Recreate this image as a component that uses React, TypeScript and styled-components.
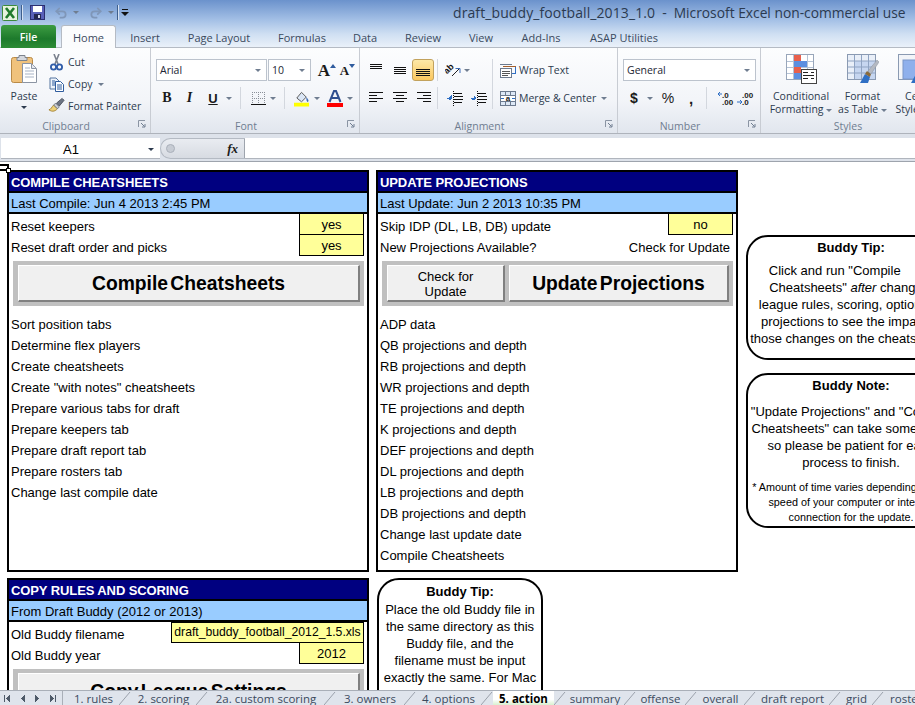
import React from "react";
import styled, { createGlobalStyle } from "styled-components";
import { Undo2, Redo2 } from "lucide-react";

const UI = `"Open Sans", "Noto Sans", sans-serif`;
const CELL = `"Liberation Sans", Arial, sans-serif`;

const Global = createGlobalStyle`
  html, body { margin: 0; padding: 0; background: #fff; overflow: hidden; }
  #root { width: 915px; height: 705px; }
`;

const Window = styled.div`
  width: 915px;
  height: 705px;
  display: flex;
  flex-direction: column;
  overflow: hidden;
  font-family: ${UI};
`;

const Chrome = styled.div`
  height: 48px;
  flex: none;
  background: linear-gradient(#6b92cc 0, #a4c0e6 20px, #cfdff2 34px, #ecf2fa 48px);
  box-shadow: inset 0 -1px 0 #b5bbc4;
`;

const TitleBar = styled.div`
  height: 25px;
  display: flex;
  align-items: center;
  padding-left: 2px;
  white-space: nowrap;
`;

const QuickSep = styled.span<{ $r?: number }>`
  width: 1px;
  height: 15px;
  background: #3f5f8c;
  box-shadow: 1px 0 0 #d6e2f2;
  margin: 0 ${(p) => p.$r ?? 7}px 0 3px;
`;

const Title = styled.div`
  margin-left: auto;
  width: 462px;
  flex: none;
  display: flex;
  align-items: baseline;
  color: #2b3a50;
  font-size: 14px;
`;

const FileName = styled.span`
  letter-spacing: 0.1px;
  margin-right: 7px;
`;

const TitleDash = styled.span`
  margin-right: 7px;
`;

const AppName = styled.span`
  font-size: 13.8px;
`;

const TabRow = styled.div`
  height: 23px;
  display: flex;
  align-items: flex-end;
  font-size: 11px;
`;

const FileTab = styled.div`
  width: 55px;
  height: 23px;
  margin: 0 5px 0 1px;
  border-radius: 3px 3px 0 0;
  background: linear-gradient(#3d9c42, #1d7a2c 60%, #2c8c35);
  color: #fff;
  font-weight: 600;
  font-size: 10.5px;
  display: flex;
  align-items: center;
  justify-content: center;
`;

const RibbonTab = styled.div<{ $active?: boolean; $w: number }>`
  width: ${(p) => p.$w}px;
  height: ${(p) => (p.$active ? 24 : 23)}px;
  text-align: center;
  line-height: 25px;
  color: #3b4a5e;
  box-sizing: border-box;
  ${(p) =>
    p.$active &&
    `background: #fbfcfd;
     border: 1px solid #b5bbc4;
     border-bottom: none;
     border-radius: 3px 3px 0 0;
     margin-bottom: -1px;
     line-height: 24px;`}
`;

const Ribbon = styled.div`
  height: 86px;
  flex: none;
  display: flex;
  font-size: 10.5px;
  color: #2c3a4e;
  background: linear-gradient(#fcfdfe, #f3f5f9 60%, #e1e6ee);
  border-bottom: 1px solid #aeb3bb;
  box-sizing: border-box;
  overflow: hidden;
`;

const Group = styled.div<{ $w: number }>`
  width: ${(p) => p.$w}px;
  flex: none;
  display: flex;
  flex-direction: column;
  box-sizing: border-box;
  border-right: 1px solid #c8ccd3;
`;

const GroupBody = styled.div`
  flex: 1;
  display: flex;
  min-height: 0;
`;

const GroupLabel = styled.div<{ $plain?: boolean }>`
  height: 17px;
  flex: none;
  display: flex;
  align-items: center;
  justify-content: center;
  padding: 2px ${(p) => (p.$plain ? 0 : 18)}px 0 0;
  box-sizing: border-box;
  color: #6f7d90;
  position: relative;
`;

const LauncherBox = styled.svg`
  position: absolute;
  right: 4px;
  top: 4px;
`;

function Launcher() {
  return (
    <LauncherBox width="8" height="8" viewBox="0 0 8 8">
      <path d="M.5 7V.5H7" fill="none" stroke="#8a94a3" />
      <path d="M3 3l3.5 3.5M7 4v3H4" fill="none" stroke="#6f7d90" />
    </LauncherBox>
  );
}

const PasteCol = styled.div`
  width: 48px;
  flex: none;
  display: flex;
  flex-direction: column;
  align-items: center;
  padding-top: 6px;
  line-height: 13px;
`;

const PasteText = styled.div`
  margin: 6px 0 3px;
`;

const ClipList = styled.div`
  display: flex;
  flex-direction: column;
  padding-top: 3px;
`;

const ClipItem = styled.div`
  height: 22px;
  display: flex;
  align-items: center;
  gap: 3px;
  white-space: nowrap;
  padding-top: 1px;
  box-sizing: border-box;
`;

const IconWrap = styled.span`
  width: 17px;
  height: 17px;
  display: flex;
  align-items: center;
  justify-content: center;
  flex: none;
`;

const Caret = styled.span<{ $ml?: number; $dark?: boolean }>`
  display: inline-block;
  flex: none;
  width: 0;
  height: 0;
  vertical-align: middle;
  margin-left: ${(p) => p.$ml ?? 0}px;
  border-left: 3px solid transparent;
  border-right: 3px solid transparent;
  border-top: 3px solid ${(p) => (p.$dark ? "#2c3a4e" : "#6f7d90")};
`;

const Stack = styled.div<{ $pl: number; $w?: number }>`
  display: flex;
  flex-direction: column;
  gap: 6px;
  padding: 11px 0 0 ${(p) => p.$pl}px;
  ${(p) => p.$w && `width: ${p.$w}px; flex: none;`}
`;

const Row = styled.div`
  height: 22px;
  display: flex;
  align-items: center;
`;

const Slot = styled.span<{ $w: number; $ml?: number; $on?: boolean }>`
  width: ${(p) => p.$w}px;
  height: 22px;
  margin-left: ${(p) => p.$ml ?? 0}px;
  flex: none;
  display: flex;
  align-items: center;
  justify-content: center;
  box-sizing: border-box;
  ${(p) =>
    p.$on &&
    `background: linear-gradient(#fde9a8, #fbc75f);
     border: 1px solid #c2a25d;
     border-radius: 3px;`}
`;

const Select = styled.div<{ $w: number }>`
  width: ${(p) => p.$w}px;
  height: 22px;
  flex: none;
  box-sizing: border-box;
  background: #fff;
  border: 1px solid #bcc3cd;
  display: flex;
  align-items: center;
  justify-content: space-between;
  padding: 0 5px 0 3px;
  color: #1c2634;
  margin-right: 1px;
`;

const VSep = styled.span<{ $ml: number; $mr: number; $h?: number }>`
  width: 1px;
  height: ${(p) => p.$h ?? 22}px;
  flex: none;
  margin: 0 ${(p) => p.$mr}px 0 ${(p) => p.$ml}px;
  background: #d3d7de;
`;

const TallSep = styled.span`
  width: 1px;
  height: 50px;
  flex: none;
  margin: 11px 7px 0 0;
  background: #d3d7de;
`;

const TextAction = styled.div`
  height: 22px;
  display: flex;
  align-items: center;
  gap: 3px;
  white-space: nowrap;
`;

const LargeButton = styled.div<{ $w: number }>`
  width: ${(p) => p.$w}px;
  flex: none;
  display: flex;
  flex-direction: column;
  align-items: center;
  padding-top: 6px;
  line-height: 13px;
  white-space: nowrap;
`;

const LargeText = styled.div`
  margin-top: 6px;
  text-align: center;
`;

const Glyph = styled.span<{ $size?: number; $weight?: number; $italic?: boolean; $font?: string }>`
  font-family: ${(p) => p.$font ?? `"Liberation Serif", serif`};
  font-size: ${(p) => p.$size ?? 13}px;
  font-weight: ${(p) => p.$weight ?? 700};
  font-style: ${(p) => (p.$italic ? "italic" : "normal")};
  color: #1a1a1a;
  line-height: 1;
`;

const UnderGlyph = styled(Glyph)`
  text-decoration: underline;
  font-family: ${CELL};
`;

const FormulaBar = styled.div`
  height: 28px;
  flex: none;
  box-sizing: border-box;
  padding: 4px 0 2px;
  background: #dde2ea;
  border-bottom: 1px solid #9ea4ad;
  display: flex;
  font-family: ${CELL};
  font-size: 13px;
`;

const NameBox = styled.div`
  width: 159px;
  margin-left: 1px;
  flex: none;
  background: #fff;
  box-sizing: border-box;
  display: flex;
  align-items: center;
  padding: 2px 6px 0 62px;
  justify-content: space-between;
  border-bottom: 1px solid #b0b5bd;
`;

const FxPill = styled.div`
  width: 85px;
  flex: none;
  box-sizing: border-box;
  border-radius: 11px 0 0 11px;
  border: 1px solid #b4bac3;
  border-right-color: #9ea4ad;
  background: linear-gradient(#e9ecf1, #d7dbe2);
  display: flex;
  align-items: center;
  justify-content: space-between;
  padding: 0 6px 0 5px;
`;

const PillDot = styled.span`
  width: 9px;
  height: 9px;
  border-radius: 50%;
  background: #c7ccd4;
  border: 1px solid #aab0ba;
  box-sizing: border-box;
`;

const FormulaInput = styled.div`
  flex: 1;
  background: #fff;
  border-bottom: 1px solid #b0b5bd;
`;

const Sheet = styled.div`
  flex: 1;
  min-height: 0;
  overflow: hidden;
  position: relative;
  display: grid;
  grid-template-columns: 362px 362px 211px;
  column-gap: 7px;
  align-content: start;
  padding: 8px 0 0 7px;
  background: #fff;
  font-family: ${CELL};
  font-size: 13px;
  color: #000;
`;

const CellHandle = styled.div`
  position: absolute;
  left: 0;
  top: 2px;
  width: 9px;
  height: 7px;
  border: 2px solid #000;
  border-left: none;
  box-sizing: border-box;
  &::after {
    content: "";
    position: absolute;
    right: -4px;
    bottom: -4px;
    width: 5px;
    height: 5px;
    background: #fff;
    border: 1px solid #000;
    box-sizing: border-box;
  }
`;

const Col = styled.div<{ $pt?: number; $pl?: number; $gap: number }>`
  display: flex;
  flex-direction: column;
  gap: ${(p) => p.$gap}px;
  padding-top: ${(p) => p.$pt ?? 0}px;
  padding-left: ${(p) => p.$pl ?? 0}px;
`;

const Panel = styled.section<{ $h: number }>`
  height: ${(p) => p.$h}px;
  flex: none;
  box-sizing: border-box;
  border: 2px solid #000;
  background: #fff;
`;

const PanelTitle = styled.div`
  height: 21px;
  box-sizing: border-box;
  padding-left: 2px;
  background: #000080;
  color: #fff;
  font-weight: 700;
  letter-spacing: -0.1px;
  line-height: 21px;
  border-bottom: 2px solid #000;
`;

const PanelSub = styled.div`
  height: 21px;
  box-sizing: border-box;
  padding-left: 2px;
  background: #99ccff;
  line-height: 21px;
  border-bottom: 2px solid #000;
`;

const CellRow = styled.div<{ $option?: boolean }>`
  height: 21px;
  line-height: ${(p) => (p.$option ? 25 : 21)}px;
  padding: 0 3px 0 2px;
  display: flex;
  justify-content: space-between;
  white-space: nowrap;
`;

const InputCell = styled.div<{ $w?: number; $small?: boolean }>`
  width: ${(p) => p.$w ?? 65}px;
  height: 21px;
  flex: none;
  box-sizing: border-box;
  background: #ffff99;
  border: 1px solid #000;
  border-top-width: ${(p) => (p.$w ? 1 : 0)}px;
  text-align: center;
  font-size: ${(p) => (p.$small ? 12.2 : 13)}px;
  line-height: ${(p) => (p.$small ? 19 : 22)}px;
`;

const LinkText = styled.span`
  padding-right: 3px;
`;

const ButtonFrame = styled.div`
  height: 45px;
  margin: 5px 3px 8px 4px;
  box-sizing: border-box;
  padding: 4px 4px 4px 5px;
  background: #c0c0c0;
  display: flex;
  gap: 4px;
`;

const MacroButton = styled.div<{ $w?: number; $big?: boolean }>`
  ${(p) => (p.$w ? `width: ${p.$w}px; flex: none;` : "flex: 1;")}
  box-sizing: border-box;
  background: #f0f0f0;
  border: 1px solid #fff;
  border-right: 2px solid #808080;
  border-bottom: 2px solid #808080;
  display: flex;
  align-items: center;
  justify-content: center;
  text-align: center;
  padding-top: 1px;
  font-size: ${(p) => (p.$big ? 19.3 : 13)}px;
  font-weight: ${(p) => (p.$big ? 700 : 400)};
  line-height: ${(p) => (p.$big ? 22 : 15)}px;
  word-spacing: ${(p) => (p.$big ? -3 : 0)}px;
`;

const TipBox = styled.aside<{ $w: number; $h: number; $r: number; $pt: number; $ml?: number }>`
  width: ${(p) => p.$w}px;
  height: ${(p) => p.$h}px;
  margin-left: ${(p) => p.$ml ?? 0}px;
  flex: none;
  box-sizing: border-box;
  border: 2px solid #000;
  border-radius: ${(p) => p.$r}px;
  padding-top: ${(p) => p.$pt}px;
  text-align: center;
  line-height: 17px;
  white-space: nowrap;
  background: #fff;
`;

const TipTitle = styled.div<{ $mb?: number }>`
  font-weight: 700;
  margin-bottom: ${(p) => p.$mb ?? 0}px;
`;

const TipSmall = styled.div`
  margin-top: 9px;
  font-size: 10.8px;
  line-height: 15px;
`;

const SheetTabs = styled.div`
  height: 15px;
  flex: none;
  display: flex;
  align-items: stretch;
  background: #dfe4ec;
  border-top: 1px solid #a9afb8;
  box-sizing: border-box;
  overflow: hidden;
  font-size: 11.5px;
  color: #3b4a5e;
  white-space: nowrap;
`;

const TabNav = styled.div`
  width: 63px;
  flex: none;
  box-sizing: border-box;
  display: flex;
  align-items: center;
  justify-content: space-between;
  padding: 0 6px 0 4px;
  border-right: 1px solid #a9afb8;
  margin-right: 5px;
`;

const SheetTab = styled.div<{ $w: number; $active?: boolean }>`
  width: ${(p) => p.$w}px;
  flex: none;
  text-align: center;
  line-height: 15px;
  ${(p) =>
    p.$active &&
    `background: linear-gradient(#fff 60%, #d8f0cf);
     color: #000;
     font-weight: 700;`}
`;

const TabSlant = styled.svg`
  flex: none;
`;

function Align({ lines, color = "#111" }: { lines: [number, number, number][]; color?: string }) {
  return (
    <svg width="16" height="16" viewBox="0 0 16 16" shapeRendering="crispEdges">
      {lines.map(([a, b, y], i) => (
        <path key={i} d={`M${a} ${y + 0.5}H${b}`} stroke={color} />
      ))}
    </svg>
  );
}

const stackLines = (top: number): [number, number, number][] =>
  [0, 2, 4, 6].map((d) => [1, 15, top + d]);

const PasteIcon = () => (
  <svg width="27" height="30" viewBox="0 0 27 30">
    <rect x="0.5" y="3.5" width="21" height="25" rx="2" fill="#f0c27c" stroke="#b98a47" />
    <path d="M8 1.5h6v2h2v3H6v-3h2z" fill="#d5d8de" stroke="#7d838c" />
    <path d="M11.5 9.5h9l5 5v14h-14z" fill="#fff" stroke="#8b94a3" />
    <path d="M20.5 10v4.5H25" fill="#e4e8ef" stroke="#8b94a3" />
    <path d="M14 14h5M14 17h9M14 20h9M14 23h9" stroke="#a7b3c5" />
  </svg>
);

const ScissorsIcon = () => (
  <svg width="15" height="17" viewBox="0 0 15 17">
    <path d="M5 0l4 10M10 0L6 10" stroke="#7b828e" strokeWidth="1.6" fill="none" />
    <circle cx="4.5" cy="13" r="2.6" fill="none" stroke="#2f5ca8" strokeWidth="1.8" />
    <circle cx="10.5" cy="13" r="2.6" fill="none" stroke="#2f5ca8" strokeWidth="1.8" />
  </svg>
);

const CopyIcon = () => (
  <svg width="16" height="15" viewBox="0 0 16 15">
    <path d="M1 1h6l3 3v8H1z" fill="#eef3fa" stroke="#55749f" />
    <path d="M6.5 4.5h5l3 3v7h-8z" fill="#fff" stroke="#2f5c9e" />
    <path d="M3 4h3M3 6h3M3 8h3M8 8h5M8 10h5M8 12h5" stroke="#2f5c9e" />
  </svg>
);

const BrushIcon = () => (
  <svg width="18" height="17" viewBox="0 0 18 17">
    <path d="M1 13c2 0 3-3 5-5l4 4c-2 2-5 4-9 1z" fill="#edd27a" stroke="#a58334" />
    <path d="M6 8l2-2 4 4-2 2z" fill="#c9ccd2" stroke="#6f7680" />
    <path d="M9 6l6-5 2 2-5 6z" fill="#6d7584" stroke="#4c5360" />
  </svg>
);

const FontSizeGlyph = ({ big }: { big?: boolean }) => <Glyph $size={big ? 17 : 13}>A</Glyph>;

const Arrow = ({ up }: { up?: boolean }) => (
  <svg width="6" height="4" viewBox="0 0 6 4" style={{ marginBottom: 9 }}>
    <path d={up ? "M0 4l3-4 3 4z" : "M0 0h6L3 4z"} fill="#2f5c9e" />
  </svg>
);

const BordersIcon = () => (
  <svg width="15" height="15" viewBox="0 0 15 15" shapeRendering="crispEdges">
    <path d="M1 1.5h13M1 7.5h13M1.5 1v11M7.5 1v11M13.5 1v11" stroke="#8a8f98" strokeDasharray="1 1" />
    <path d="M0 13.5h15" stroke="#111" />
  </svg>
);

const FillIcon = () => (
  <svg width="17" height="17" viewBox="0 0 17 17">
    <path d="M3 8l5-6 5 5-5 5z" fill="#dbe6f5" stroke="#555" />
    <path d="M13 7c2 2 3 4 2 5s-2-1-2-5z" fill="#3c6bb4" />
    <rect x="0" y="13" width="16" height="4" fill="#ffff00" />
  </svg>
);

const ColorA = () => (
  <svg width="16" height="17" viewBox="0 0 16 17">
    <path d="M2.5 12L7 1h2l4.5 11M5 8h6" fill="none" stroke="#2f4f8f" strokeWidth="2" />
    <rect x="0" y="13" width="16" height="4" fill="#ff0000" />
  </svg>
);

const OrientationIcon = () => (
  <svg width="17" height="15" viewBox="0 0 17 15">
    <text x="0" y="9" fontFamily={CELL} fontSize="9" fontWeight="700" fill="#111" transform="rotate(-45 4 8)">
      ab
    </text>
    <path d="M7 13l7-7" stroke="#222" />
    <path d="M10.5 5.5H15V10" fill="none" stroke="#3c6bb4" />
  </svg>
);

const IndentIcon = () => (
  <svg width="16" height="15" viewBox="0 0 16 15" shapeRendering="crispEdges">
    <path d="M7 2.5h8M7 5.5h9M7 8.5h9M7 11.5h8" stroke="#111" />
    <path d="M6 0v15" stroke="#111" strokeDasharray="1 1" />
    <path d="M0 7h4v-2l-2 2 2 2z" fill="#2f6fc4" stroke="#2f6fc4" />
  </svg>
);

const IndentMoreIcon = () => (
  <svg width="16" height="15" viewBox="0 0 16 15" shapeRendering="crispEdges">
    <path d="M7 2.5h8M7 5.5h9M7 8.5h9M7 11.5h8" stroke="#111" />
    <path d="M6 0v15" stroke="#111" strokeDasharray="1 1" />
    <path d="M0 7h3V5l2 2-2 2z" fill="#2f6fc4" stroke="#2f6fc4" />
  </svg>
);

const WrapIcon = () => (
  <svg width="16" height="15" viewBox="0 0 16 15" shapeRendering="crispEdges">
    <rect x="0.5" y="5.5" width="11" height="9" fill="#fff" stroke="#6c7a8e" />
    <path d="M0 1.5h12" stroke="#6c7a8e" />
    <path d="M3 3.5h13" stroke="#a5602c" />
    <path d="M2 8.5h8M2 10.5h8M2 12.5h6" stroke="#555" />
    <path d="M15 4v6h-3" fill="none" stroke="#2f6fc4" />
  </svg>
);

const MergeIcon = () => (
  <svg width="16" height="15" viewBox="0 0 16 15">
    <rect x="0.5" y="0.5" width="15" height="14" fill="#dde8f6" stroke="#6c7a8e" />
    <path d="M1 4.5h14M1 10.5h14M5.5 1v3M10.5 1v3M5.5 11v3M10.5 11v3" stroke="#6c7a8e" />
    <rect x="1" y="5" width="14" height="5" fill="#fff" />
    <text x="8" y="10" textAnchor="middle" fontFamily={CELL} fontSize="8" fontWeight="700" fill="#222">
      a
    </text>
    <path d="M1 7.5h3M15 7.5h-3" stroke="#2f6fc4" />
  </svg>
);

const DecimalIcon = ({ less }: { less?: boolean }) => (
  <svg width="17" height="15" viewBox="0 0 17 15">
    <text x="5" y="6.5" fontFamily={CELL} fontSize="8" fontWeight="700" fill="#222">
      {less ? ".00" : ".0"}
    </text>
    <text x="5" y="14" fontFamily={CELL} fontSize="8" fontWeight="700" fill="#222">
      {less ? ".0" : ".00"}
    </text>
    <path d={less ? "M0 11h4M3 9l2 2-2 2" : "M1 3h4M3 1L1 3l2 2"} fill="none" stroke="#2f6fc4" />
  </svg>
);

const CondIcon = () => (
  <svg width="31" height="30" viewBox="0 0 31 30" shapeRendering="crispEdges">
    <rect x="0.5" y="0.5" width="27" height="25" fill="#fff" stroke="#98a6ba" />
    <path d="M7.5 1v24M21.5 1v24M1 7h26M1 13h26M1 19h26" stroke="#b5c3d6" />
    <rect x="8" y="1" width="7" height="6" fill="#e8604c" />
    <rect x="8" y="7" width="13" height="6" fill="#5d8fe0" />
    <rect x="8" y="13" width="7" height="6" fill="#e8604c" />
    <rect x="8" y="19" width="7" height="6" fill="#5d8fe0" />
    <rect x="15" y="15" width="15" height="14" fill="#fff" stroke="#444" />
    <path d="M17 18h5M25 18h3M17 21h11M17 24h5M25 24h3" stroke="#222" />
  </svg>
);

const PaintBrush = () => (
  <g>
    <path d="M13 29l5-9 5 3-2 6z" fill="#2f6fc4" />
    <path d="M18 20l2-3 4 3-1 3z" fill="#8a6a3a" />
    <path d="M21 17l9-11 2 2-8 12z" fill="#b4b9c2" stroke="#8a909a" strokeWidth="0.5" />
  </g>
);

const TableIcon = () => (
  <svg width="32" height="30" viewBox="0 0 32 30">
    <rect x="0.5" y="0.5" width="28" height="25" fill="#c6d6f0" stroke="#8a9ab2" />
    <rect x="1" y="1" width="27" height="6" fill="#e9eff8" />
    <rect x="1" y="7" width="6" height="18" fill="#e9eff8" />
    <path d="M7.5 1v24M14.5 1v24M21.5 1v24M1 7h27M1 13h27M1 19h27" stroke="#8fa3c2" />
    <PaintBrush />
  </svg>
);

const CellIcon = () => (
  <svg width="32" height="30" viewBox="0 0 32 30">
    <rect x="0.5" y="0.5" width="28" height="25" fill="#f2f4f8" stroke="#8a9ab2" />
    <rect x="5" y="6" width="23" height="19" fill="#8fb0ec" stroke="#7a96c8" />
    <PaintBrush />
  </svg>
);

const ExcelIcon = () => (
  <svg width="16" height="16" viewBox="0 0 16 16">
    <rect x="0.5" y="0.5" width="15" height="15" rx="1" fill="#e6f3de" stroke="#3d8a3d" />
    <path d="M4 3l8 10M12 3L4 13" stroke="#1f7a2c" strokeWidth="2.6" />
  </svg>
);

const SaveIcon = () => (
  <svg width="15" height="15" viewBox="0 0 15 15">
    <rect x="0.5" y="0.5" width="14" height="14" fill="#5960b8" stroke="#2c2f70" />
    <rect x="3" y="1" width="9" height="6" fill="#fff" />
    <rect x="4" y="9" width="7" height="5" fill="#23264f" />
    <rect x="8" y="10" width="2" height="3" fill="#d6d9ee" />
  </svg>
);

const CustomizeIcon = () => (
  <svg width="9" height="9" viewBox="0 0 9 9">
    <path d="M1 1.5h6" stroke="#111" />
    <path d="M0 4h8L4 8z" fill="#111" />
  </svg>
);

// first / previous / next / last arrows of the sheet tab strip
const NavArrow = ({ dir, bar }: { dir: "left" | "right"; bar?: boolean }) => (
  <svg width="8" height="9" viewBox="0 0 8 9" shapeRendering="crispEdges">
    <path d={dir === "left" ? "M6 1v7L2 4.5z" : "M2 1v7l4-3.5z"} fill="#4d5968" />
    {bar && <path d={dir === "left" ? "M.5 1v7" : "M7.5 1v7"} stroke="#4d5968" />}
  </svg>
);

const ribbonTabs: [string, number][] = [
  ["Insert", 58],
  ["Page Layout", 90],
  ["Formulas", 76],
  ["Data", 50],
  ["Review", 66],
  ["View", 50],
  ["Add-Ins", 70],
  ["ASAP Utilities", 96],
];

const compileSteps = [
  "Sort position tabs",
  "Determine flex players",
  "Create cheatsheets",
  'Create "with notes" cheatsheets',
  "Prepare various tabs for draft",
  "Prepare keepers tab",
  "Prepare draft report tab",
  "Prepare rosters tab",
  "Change last compile date",
];

const updateSteps = [
  "ADP data",
  "QB projections and depth",
  "RB projections and depth",
  "WR projections and depth",
  "TE projections and depth",
  "K projections and depth",
  "DEF projections and depth",
  "DL projections and depth",
  "LB projections and depth",
  "DB projections and depth",
  "Change last update date",
  "Compile Cheatsheets",
];

const sheetTabs: [string, number, boolean?][] = [
  ["1. rules", 51],
  ["2. scoring", 65],
  ["2a. custom scoring", 116],
  ["3. owners", 68],
  ["4. options", 65],
  ["5. action", 61, true],
  ["summary", 58],
  ["offense", 49],
  ["overall", 47],
  ["draft report", 73],
  ["grid", 31],
  ["rosters", 50],
];

export default function App() {
  return (
    <Window>
      <Global />
      <Chrome>
        <TitleBar>
          <ExcelIcon />
          <QuickSep $r={8} />
          <SaveIcon />
          <Slot $w={24} $ml={4}>
            <Undo2 size={14} color="#7f96b8" strokeWidth={3} />
          </Slot>
          <Caret />
          <Slot $w={24} $ml={5}>
            <Redo2 size={14} color="#7f96b8" strokeWidth={3} />
          </Slot>
          <Caret />
          <QuickSep $r={3} />
          <CustomizeIcon />
          <Title>
            <FileName>draft_buddy_football_2013_1.0</FileName>
            <TitleDash>-</TitleDash>
            <AppName>Microsoft Excel non-commercial use</AppName>
          </Title>
        </TitleBar>
        <TabRow>
          <FileTab>File</FileTab>
          <RibbonTab $active $w={55}>
            Home
          </RibbonTab>
          {ribbonTabs.map(([name, w]) => (
            <RibbonTab key={name} $w={w}>
              {name}
            </RibbonTab>
          ))}
        </TabRow>
      </Chrome>

      <Ribbon>
        <Group $w={151}>
          <GroupBody>
            <PasteCol>
              <PasteIcon />
              <PasteText>Paste</PasteText>
              <Caret $dark />
            </PasteCol>
            <ClipList>
              <ClipItem>
                <IconWrap>
                  <ScissorsIcon />
                </IconWrap>
                Cut
              </ClipItem>
              <ClipItem>
                <IconWrap>
                  <CopyIcon />
                </IconWrap>
                Copy
                <Caret $ml={2} />
              </ClipItem>
              <ClipItem>
                <IconWrap>
                  <BrushIcon />
                </IconWrap>
                Format Painter
              </ClipItem>
            </ClipList>
          </GroupBody>
          <GroupLabel>
            Clipboard
            <Launcher />
          </GroupLabel>
        </Group>

        <Group $w={209}>
          <GroupBody>
            <Stack $pl={5}>
              <Row>
                <Select $w={111}>
                  Arial
                  <Caret />
                </Select>
                <Select $w={43}>
                  10
                  <Caret />
                </Select>
                <Slot $w={22} $ml={4}>
                  <FontSizeGlyph big />
                  <Arrow up />
                </Slot>
                <Slot $w={19}>
                  <FontSizeGlyph />
                  <Arrow />
                </Slot>
              </Row>
              <Row>
                <Slot $w={22}>
                  <Glyph $size={14}>B</Glyph>
                </Slot>
                <Slot $w={23}>
                  <Glyph $size={14} $italic>
                    I
                  </Glyph>
                </Slot>
                <Slot $w={24}>
                  <UnderGlyph $size={13}>U</UnderGlyph>
                </Slot>
                <Slot $w={8}>
                  <Caret />
                </Slot>
                <VSep $ml={7} $mr={10} />
                <Slot $w={15}>
                  <BordersIcon />
                </Slot>
                <Slot $w={8} $ml={3}>
                  <Caret />
                </Slot>
                <VSep $ml={7} $mr={9} />
                <Slot $w={16}>
                  <FillIcon />
                </Slot>
                <Slot $w={8} $ml={3}>
                  <Caret />
                </Slot>
                <Slot $w={16} $ml={6}>
                  <ColorA />
                </Slot>
                <Slot $w={8} $ml={3}>
                  <Caret />
                </Slot>
              </Row>
            </Stack>
          </GroupBody>
          <GroupLabel>
            Font
            <Launcher />
          </GroupLabel>
        </Group>

        <Group $w={258}>
          <GroupBody>
            <Stack $pl={5} $w={127}>
              <Row>
                <Slot $w={22}>
                  <Align lines={[[2, 14, 2], [2, 14, 4], [2, 14, 6]]} />
                </Slot>
                <Slot $w={23} $ml={1}>
                  <Align lines={[[2, 14, 5], [2, 14, 7], [2, 14, 9], [2, 14, 11]]} />
                </Slot>
                <Slot $w={22} $on $ml={1}>
                  <Align lines={stackLines(7)} />
                </Slot>
                <VSep $ml={3} $mr={7} />
                <Slot $w={17}>
                  <OrientationIcon />
                </Slot>
                <Slot $w={7} $ml={1}>
                  <Caret />
                </Slot>
              </Row>
              <Row>
                <Slot $w={22}>
                  <Align lines={[[1, 15, 2], [1, 9, 5], [1, 15, 8], [1, 9, 11]]} />
                </Slot>
                <Slot $w={24} $ml={1}>
                  <Align lines={[[1, 15, 2], [4, 12, 5], [1, 15, 8], [4, 12, 11]]} />
                </Slot>
                <Slot $w={22} $ml={1}>
                  <Align lines={[[1, 15, 2], [7, 15, 5], [1, 15, 8], [7, 15, 11]]} />
                </Slot>
                <VSep $ml={2} $mr={9} />
                <Slot $w={16}>
                  <IndentIcon />
                </Slot>
                <Slot $w={16} $ml={8}>
                  <IndentMoreIcon />
                </Slot>
              </Row>
            </Stack>
            <TallSep />
            <Stack $pl={0}>
              <TextAction>
                <WrapIcon />
                Wrap Text
              </TextAction>
              <TextAction>
                <MergeIcon />
                Merge &amp; Center
                <Caret $ml={2} />
              </TextAction>
            </Stack>
          </GroupBody>
          <GroupLabel>
            Alignment
            <Launcher />
          </GroupLabel>
        </Group>

        <Group $w={143}>
          <GroupBody>
            <Stack $pl={5}>
              <Row>
                <Select $w={133}>
                  General
                  <Caret />
                </Select>
              </Row>
              <Row>
                <Slot $w={22}>
                  <Glyph $size={14} $font={CELL}>
                    $
                  </Glyph>
                </Slot>
                <Slot $w={8} $ml={1}>
                  <Caret />
                </Slot>
                <Slot $w={20} $ml={4}>
                  <Glyph $size={14} $weight={400} $font={CELL}>
                    %
                  </Glyph>
                </Slot>
                <Slot $w={18} $ml={4}>
                  <Glyph $size={15} $font={CELL}>
                    ,
                  </Glyph>
                </Slot>
                <VSep $ml={6} $mr={9} />
                <Slot $w={18}>
                  <DecimalIcon />
                </Slot>
                <Slot $w={18} $ml={2}>
                  <DecimalIcon less />
                </Slot>
              </Row>
            </Stack>
          </GroupBody>
          <GroupLabel>
            Number
            <Launcher />
          </GroupLabel>
        </Group>

        <Group $w={175}>
          <GroupBody>
            <LargeButton $w={80}>
              <CondIcon />
              <LargeText>
                Conditional
                <br />
                Formatting <Caret />
              </LargeText>
            </LargeButton>
            <LargeButton $w={43}>
              <TableIcon />
              <LargeText>
                Format
                <br />
                as Table <Caret />
              </LargeText>
            </LargeButton>
            <LargeButton $w={60}>
              <CellIcon />
              <LargeText>
                Cell
                <br />
                Styles <Caret />
              </LargeText>
            </LargeButton>
          </GroupBody>
          <GroupLabel $plain>Styles</GroupLabel>
        </Group>
      </Ribbon>

      <FormulaBar>
        <NameBox>
          A1
          <Caret $dark />
        </NameBox>
        <FxPill>
          <PillDot />
          <Glyph $size={13} $italic>
            fx
          </Glyph>
        </FxPill>
        <FormulaInput />
      </FormulaBar>

      <Sheet>
        <CellHandle />
        <Col $gap={6}>
          <Panel $h={402}>
            <PanelTitle>COMPILE CHEATSHEETS</PanelTitle>
            <PanelSub>Last Compile: Jun 4 2013 2:45 PM</PanelSub>
            <CellRow $option>
              Reset keepers
              <InputCell>yes</InputCell>
            </CellRow>
            <CellRow $option>
              Reset draft order and picks
              <InputCell>yes</InputCell>
            </CellRow>
            <ButtonFrame>
              <MacroButton $big>Compile Cheatsheets</MacroButton>
            </ButtonFrame>
            {compileSteps.map((s) => (
              <CellRow key={s}>{s}</CellRow>
            ))}
          </Panel>
          <Panel $h={140}>
            <PanelTitle>COPY RULES AND SCORING</PanelTitle>
            <PanelSub>From Draft Buddy (2012 or 2013)</PanelSub>
            <CellRow $option>
              Old Buddy filename
              <InputCell $w={193} $small>
                draft_buddy_football_2012_1.5.xls
              </InputCell>
            </CellRow>
            <CellRow $option>
              Old Buddy year
              <InputCell>2012</InputCell>
            </CellRow>
            <ButtonFrame>
              <MacroButton $big>Copy League Settings</MacroButton>
            </ButtonFrame>
          </Panel>
        </Col>
        <Col $gap={6}>
          <Panel $h={402}>
            <PanelTitle>UPDATE PROJECTIONS</PanelTitle>
            <PanelSub>Last Update: Jun 2 2013 10:35 PM</PanelSub>
            <CellRow $option>
              Skip IDP (DL, LB, DB) update
              <InputCell>no</InputCell>
            </CellRow>
            <CellRow $option>
              New Projections Available?
              <LinkText>Check for Update</LinkText>
            </CellRow>
            <ButtonFrame>
              <MacroButton $w={118}>
                Check for
                <br />
                Update
              </MacroButton>
              <MacroButton $big>Update Projections</MacroButton>
            </ButtonFrame>
            {updateSteps.map((s) => (
              <CellRow key={s}>{s}</CellRow>
            ))}
          </Panel>
          <TipBox $w={166} $h={140} $r={22} $pt={3} $ml={1}>
            <TipTitle $mb={1}>Buddy Tip:</TipTitle>
            Place the old Buddy file in
            <br />
            the same directory as this
            <br />
            Buddy file, and the
            <br />
            filename must be input
            <br />
            exactly the same. For Mac
            <br />
            users, insert the file path
          </TipBox>
        </Col>
        <Col $gap={13} $pt={65} $pl={1}>
          <TipBox $w={210} $h={125} $r={22} $pt={2}>
            <TipTitle $mb={6}>Buddy Tip:</TipTitle>
            Click and run "Compile{"\u00a0\u00a0\u00a0\u00a0\u00a0\u00a0\u00a0\u00a0\u00a0"}
            <br />
            Cheatsheets" <i>after</i> changing
            <br />
            league rules, scoring, options or
            <br />
            projections to see the impact of
            <br />
            those changes on the cheatsheets.
          </TipBox>
          <TipBox $w={210} $h={155} $r={22} $pt={2}>
            <TipTitle $mb={9}>Buddy Note:</TipTitle>
            "Update Projections" and "Compile
            <br />
            Cheatsheets" can take some time*
            <br />
            so please be patient for each
            <br />
            process to finish.
            <TipSmall>
              * Amount of time varies depending on the
              <br />
              speed of your computer or internet
              <br />
              connection for the update.
            </TipSmall>
          </TipBox>
        </Col>
      </Sheet>

      <SheetTabs>
        <TabNav>
          <NavArrow dir="left" bar />
          <NavArrow dir="left" />
          <NavArrow dir="right" />
          <NavArrow dir="right" bar />
        </TabNav>
        {sheetTabs.map(([name, w, active]) => (
          <React.Fragment key={name}>
            <SheetTab $w={w} $active={active}>
              {name}
            </SheetTab>
            <TabSlant width="12" height="14" viewBox="0 0 12 14">
              <path d="M0 14L11 1" stroke="#9aa1ab" fill="none" />
            </TabSlant>
          </React.Fragment>
        ))}
      </SheetTabs>
    </Window>
  );
}
